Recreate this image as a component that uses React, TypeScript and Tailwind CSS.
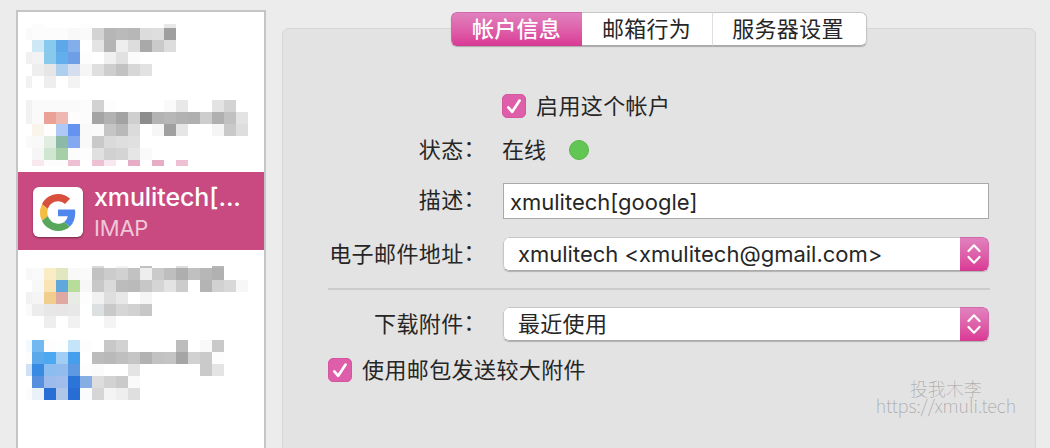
import React from "react";

const FONT = "font-['Inter','Noto_Sans_CJK_SC',sans-serif]";

type Row = Record<number, string>;

const CELL = 12;

const accounts: Record<string, Row[]> = {
  first: [
    { 1: "#fcfcfc", 5: "#fdfdfd", 12: "#e8e8e8" },
    { 0: "#fafafa", 1: "#fcfcfc", 2: "#fcfcfc", 3: "#fcfcfc", 4: "#f8f8f8", 5: "#fafafa", 6: "#d3d3d3", 7: "#b6b6b6", 8: "#bababa", 9: "#b7b7b7", 10: "#dcdcdc", 11: "#dedede", 12: "#9f9f9f" },
    { 1: "#cfe8f5", 2: "#87caed", 3: "#5ea8ea", 4: "#82afec", 6: "#e4e4e4", 7: "#b5b5b5", 8: "#eeeeee", 9: "#dddddd", 10: "#a9a9a9", 11: "#cacaca", 12: "#dddddd" },
    { 0: "#f1f1f1", 1: "#f3f3f3", 2: "#88c9ec", 3: "#62afeb", 4: "#6d9ee6", 5: "#fdfdfd", 7: "#f0f0f0", 8: "#e1e1e1", 9: "#fbfbfb" },
    { 1: "#eeeeee", 2: "#e6e6e6", 3: "#aecfed", 4: "#d5deee", 5: "#f6f6f6", 6: "#dfdfdf", 7: "#cecece", 8: "#c2c2c2", 9: "#d7d7d7", 10: "#e2e2e2" },
    { 0: "#f2f2f2", 2: "#eeeeee", 4: "#f3f3f3" },
  ],
  second: [
    {},
    { 0: "#f2f2f2", 1: "#fafafa", 2: "#fafafa", 3: "#fafafa", 4: "#fafafa", 5: "#fcfcfc", 6: "#d2d2d2", 7: "#fdfdfd", 12: "#fafafa", 13: "#e8e8e8", 16: "#e3e3e3", 17: "#d3d3d3" },
    { 0: "#f2f2f2", 1: "#fafafa", 2: "#e9a198", 3: "#edb8b2", 4: "#fffcfc", 5: "#fcfcfc", 6: "#a4a4a4", 7: "#b2b2b2", 8: "#a3a3a3", 9: "#cfcfcf", 10: "#8d8d8d", 11: "#b3b3b3", 12: "#b7b7b7", 13: "#b2b2b2", 14: "#b0b0b0", 15: "#cdcdcd", 16: "#b0b0b0", 17: "#c1c1c1", 18: "#e3e3e3" },
    { 1: "#f9f5ea", 2: "#fffdfd", 3: "#afc9f7", 4: "#6494ef", 5: "#f9f9f9", 6: "#fafafa", 7: "#c5c5c5", 8: "#b9b9b9", 9: "#dbdbdb", 11: "#f6f6f6", 12: "#a0a0a0", 13: "#e6e6e6", 16: "#f5f5f5", 17: "#c9c9c9", 18: "#dedede" },
    { 0: "#fafafa", 1: "#f9f9f9", 2: "#e0eee2", 3: "#8cbaa7", 4: "#84a9f0", 5: "#f9f9f9", 6: "#c9c9c9", 7: "#dadada", 8: "#dedede", 9: "#e0e0e0" },
    { 1: "#f6f6f6", 2: "#cfe6d0", 3: "#a6cfa8", 4: "#fcfcfc", 5: "#fdfdfd", 6: "#e0e0e0", 7: "#d1d1d1", 8: "#d4d4d4", 9: "#e6e6e6", 10: "#fafafa" },
    { 1: "#f8e9ef", 2: "#fdfdfd", 3: "#fdfdfd", 4: "#edc0d3", 6: "#edc0d3", 7: "#f8e8ef", 9: "#e7adc7", 11: "#e7adc7", 13: "#edc0d3" },
  ],
  third: [
    { 6: "#d8d8d8", 8: "#f3f3f3", 10: "#c1c1c1", 13: "#dcdcdc", 16: "#b5b5b5" },
    { 0: "#f8f8f8", 1: "#fafafa", 2: "#faecc5", 3: "#e2e7bf", 4: "#f9faf7", 5: "#fafafa", 6: "#c2c2c2", 7: "#cccccc", 8: "#d1d1d1", 9: "#c2c2c2", 10: "#eeeeee", 11: "#cacaca", 12: "#bebebe", 13: "#aeaeae", 14: "#c0c0c0", 15: "#b7b7b7", 16: "#b1b1b1" },
    { 1: "#f8f8f8", 2: "#fae4b5", 3: "#60a8db", 4: "#b8dc99", 5: "#f7f7f7", 6: "#c8c8c8", 7: "#dadada", 8: "#bcbcbc", 9: "#bababa", 10: "#c7c7c7", 11: "#d5d5d5", 12: "#e3e3e3", 13: "#cccccc", 15: "#b4b4b4", 16: "#d1d1d1", 17: "#d8d8d8", 18: "#f7f7f7" },
    { 0: "#f2f2f2", 1: "#f5f5f5", 2: "#f2ce8e", 3: "#dfa8a2", 4: "#e9ece4", 5: "#fdfdfd", 6: "#f1f1f1", 7: "#dedede", 8: "#e8e8e8", 10: "#f5f5f5" },
    { 0: "#fafafa", 1: "#ececec", 2: "#e8e7e8", 3: "#e8e5e6", 4: "#e8e8e8", 6: "#dce0e0", 7: "#c9c9c9", 8: "#d6d6d6", 9: "#d1d1d1", 10: "#c7c7c7" },
    { 2: "#eeeeee", 4: "#f1f1f1", 7: "#f4f4f4" },
  ],
  fourth: [
    {},
    { 0: "#f3faff", 1: "#72b9f2", 2: "#fdfdfd", 3: "#fdfefe", 4: "#c4e4f9", 5: "#fdfdfd", 7: "#c8c8c8", 8: "#d2d2d2", 13: "#bdbdbd", 15: "#f9f9f9", 16: "#c9c9c9" },
    { 0: "#fdfdfd", 1: "#5ba9eb", 2: "#4ba8f1", 3: "#a2cdf4", 4: "#469fed", 6: "#bcbcbc", 7: "#b9b9b9", 8: "#bfbfbf", 9: "#c5c5c5", 10: "#b2b2b2", 11: "#c2c2c2", 12: "#c4c4c4", 13: "#a5a5a5", 14: "#d1d1d1", 15: "#cacaca", 16: "#fdfdfd" },
    { 0: "#cfe1f7", 1: "#398ae3", 2: "#8bbdf1", 3: "#92bcee", 4: "#5e9ae2", 5: "#fdfdfd", 6: "#fbfbfb", 9: "#e4e4e4", 15: "#cacaca", 16: "#e4e4e4" },
    { 1: "#568fde", 2: "#9dbceb", 3: "#a1bdeb", 4: "#2b75d8", 5: "#84aee4", 6: "#dddddd", 7: "#d2d2d2", 8: "#cacaca", 9: "#fafafa" },
    { 0: "#fcfcfc", 1: "#ebf1f9", 2: "#286ed4", 3: "#b0c6e8", 4: "#286dd4", 5: "#f9fbfd", 6: "#d6d6d6", 7: "#f4f4f4", 8: "#eeeeee", 9: "#dfdfdf" },
  ],
};

// The first row of cells is 4px high and the leading column is 6px wide.
function Mosaic({ rows, height }: { rows: Row[]; height: number }) {
  return (
    <svg width="246" height={height} viewBox={`0 0 246 ${height}`} shapeRendering="crispEdges" className="block shrink-0" aria-hidden="true">
      {rows.map((row, r) =>
        Object.entries(row).map(([key, fill]) => {
          const c = Number(key);
          // The top strip of the third account is only 2px high.
          const top = rows === accounts.third ? 2 : 4;
          return (
            <rect
              key={`${r}-${c}`}
              x={c === 0 ? 8 : 2 + c * CELL}
              y={r === 0 ? 0 : top + (r - 1) * CELL}
              width={c === 0 ? 6 : CELL}
              height={r === 0 ? top : r === 6 ? 6 : CELL}
              fill={fill}
            />
          );
        }),
      )}
    </svg>
  );
}

function GoogleIcon() {
  return (
    <svg width="36" height="37" viewBox="0 0 48 48" preserveAspectRatio="none" aria-hidden="true">
      <path fill="#d94f3e" d="M24 9.5c3.54 0 6.71 1.22 9.21 3.6l6.85-6.85C35.9 2.38 30.47 0 24 0 14.62 0 6.51 5.38 2.56 13.22l7.98 6.19C12.43 13.72 17.74 9.5 24 9.5z" />
      <path fill="#5087ec" d="M46.98 24.55c0-1.57-.15-3.09-.38-4.55H24v9.02h12.94c-.58 2.96-2.26 5.48-4.78 7.18l7.73 6c4.51-4.18 7.09-10.36 7.09-17.65z" />
      <path fill="#f3bd42" d="M10.53 28.59c-.48-1.45-.76-2.99-.76-4.59s.27-3.14.76-4.59l-7.98-6.19C.92 16.46 0 20.12 0 24c0 3.88.92 7.54 2.56 10.78l7.97-6.19z" />
      <path fill="#58a65c" d="M24 48c6.48 0 11.93-2.13 15.89-5.81l-7.73-6c-2.15 1.45-4.92 2.3-8.16 2.3-6.26 0-11.57-4.22-13.47-9.91l-7.98 6.19C6.51 42.62 14.62 48 24 48z" />
    </svg>
  );
}

function Checkbox() {
  return (
    <span className="flex size-6 shrink-0 items-center justify-center rounded-[5px] border border-[#d5559f] bg-[#de5ea9]">
      <svg width="22" height="22" viewBox="0 0 22 22" fill="none" stroke="white" strokeWidth="2.7" strokeLinecap="round" strokeLinejoin="round" aria-hidden="true">
        <path d="M5.3 12.4 9.2 16.8 16.6 5.6" />
      </svg>
    </span>
  );
}

function Select({ children }: { children: React.ReactNode }) {
  return (
    <div className="ml-px flex h-[34px] w-[486px] overflow-hidden rounded-[6px] bg-white shadow-[0_1px_1px_rgba(0,0,0,0.22)]">
      <div className="flex flex-1 items-center rounded-l-[6px] border border-r-0 border-[#c6c6c6] border-b-[#a9a9a9] pl-[14px]">{children}</div>
      <div className="flex w-[29px] items-center justify-center rounded-r-[6px] border border-l-0 border-[#d168ab] border-b-[#cf3c90] bg-linear-to-b from-[#e081be] to-[#da3a96]">
        <svg width="14" height="20" viewBox="0 0 14 20" fill="none" stroke="white" strokeWidth="2.2" strokeLinecap="round" strokeLinejoin="round" aria-hidden="true">
          <path d="M1.5 7 7 1.3 12.5 7M1.5 13 7 18.7 12.5 13" />
        </svg>
      </div>
    </div>
  );
}

function Label({ children }: { children: React.ReactNode }) {
  return (
    <div className="mr-4 w-[158px] shrink-0 text-right tracking-[0.4px] whitespace-nowrap">
      {children}
      <span className="align-[2px] leading-none">：</span>
    </div>
  );
}

export default function App() {
  return (
    <div className={`${FONT} flex h-[448px] w-[1050px] overflow-hidden bg-[#ececec] text-[22px] leading-[32px] text-[#262626]`} lang="zh-CN">
      <aside className="mt-[10px] ml-4 flex h-[460px] w-[250px] shrink-0 flex-col border-2 border-[#c5c5c5] bg-white pt-3">
        <Mosaic rows={accounts.first} height={72} />
        <Mosaic rows={accounts.second} height={76} />
        <div className="flex h-[78px] shrink-0 items-center bg-[#c94a80] pt-[2px] pl-[15px]">
          <div className="flex size-[50px] shrink-0 items-center justify-center rounded-[6px] bg-white shadow-[0_1px_2px_rgba(0,0,0,0.45)]">
            <GoogleIcon />
          </div>
          <div className="ml-[11px] text-white">
            <div className="text-[25px] leading-[32px] font-medium tracking-[-0.1px]">xmulitech[...</div>
            <div className="text-[22px] leading-[30px] tracking-[-0.2px] text-[#f0c7d8]">IMAP</div>
          </div>
        </div>
        <div className="h-4 shrink-0" />
        <Mosaic rows={accounts.third} height={70} />
        <Mosaic rows={accounts.fourth} height={72} />
      </aside>

      <main className="mt-[28px] ml-4 flex h-[440px] w-[754px] shrink-0 flex-col rounded-[7px] border border-[#d6d6d6] bg-[#e3e3e3]">
        <nav className="-mt-[17px] flex h-[34px] w-[416px] shrink-0 self-center rounded-[6px] bg-white tracking-[0.3px] shadow-[0_1px_1px_rgba(0,0,0,0.25)]">
          <div className="flex w-[131px] items-center justify-center rounded-l-[6px] border border-r-0 border-[#d168ab] border-b-[#cf3c90] bg-linear-to-b from-[#e081be] to-[#da3a96] pr-px font-medium text-white">帐户信息</div>
          <div className="flex w-[131px] items-center justify-center border-y border-r border-[#c6c6c6] border-r-[#dedede] border-b-[#a9a9a9] pr-px">邮箱行为</div>
          <div className="flex flex-1 items-center justify-center rounded-r-[6px] border border-l-0 border-[#c6c6c6] border-b-[#a9a9a9] pr-[3px]">服务器设置</div>
        </nav>

        <div className="flex flex-col pt-12 pl-[45px]">
          <div className="flex h-6 items-center gap-[10px] pl-[174px] tracking-[0.4px]">
            <Checkbox />
            <span>启用这个帐户</span>
          </div>
          <div className="mt-4 flex h-8 items-center">
            <Label>状态</Label>
            <span>在线</span>
            <span className="ml-[23px] size-5 rounded-full border border-[#57b649] bg-[#62c655]" />
          </div>
          <div className="mt-[17px] flex h-9 items-center">
            <div className="pb-[2px]">
              <Label>描述</Label>
            </div>
            <div className="ml-px flex h-9 w-[486px] items-center border border-[#a9a9a9] bg-white pt-[2px] pl-[6px]">xmulitech[google]</div>
          </div>
          <div className="mt-[18px] flex h-[34px] items-center">
            <Label>电子邮件地址</Label>
            <Select>xmulitech &lt;xmulitech@gmail.com&gt;</Select>
          </div>
          <hr className="mt-[17px] h-[2px] w-[662px] border-0 bg-[#cccccc]" />
          <div className="mt-[17px] flex h-[34px] items-center">
            <Label>下载附件</Label>
            <Select>
              <span className="tracking-[0.3px]">最近使用</span>
            </Select>
          </div>
          <div className="mt-[17px] flex h-6 items-center gap-[10px] tracking-[0.4px]">
            <Checkbox />
            <span>使用邮包发送较大附件</span>
          </div>
        </div>

        <footer className="mt-[-2px] mr-[19px] flex flex-col items-center self-end font-['Noto_Sans_CJK_SC',sans-serif] text-[18px] leading-[17px] font-thin text-[#a2a2a2]">
          <span>投我木李</span>
          <span>https://xmuli.tech</span>
        </footer>
      </main>
    </div>
  );
}
